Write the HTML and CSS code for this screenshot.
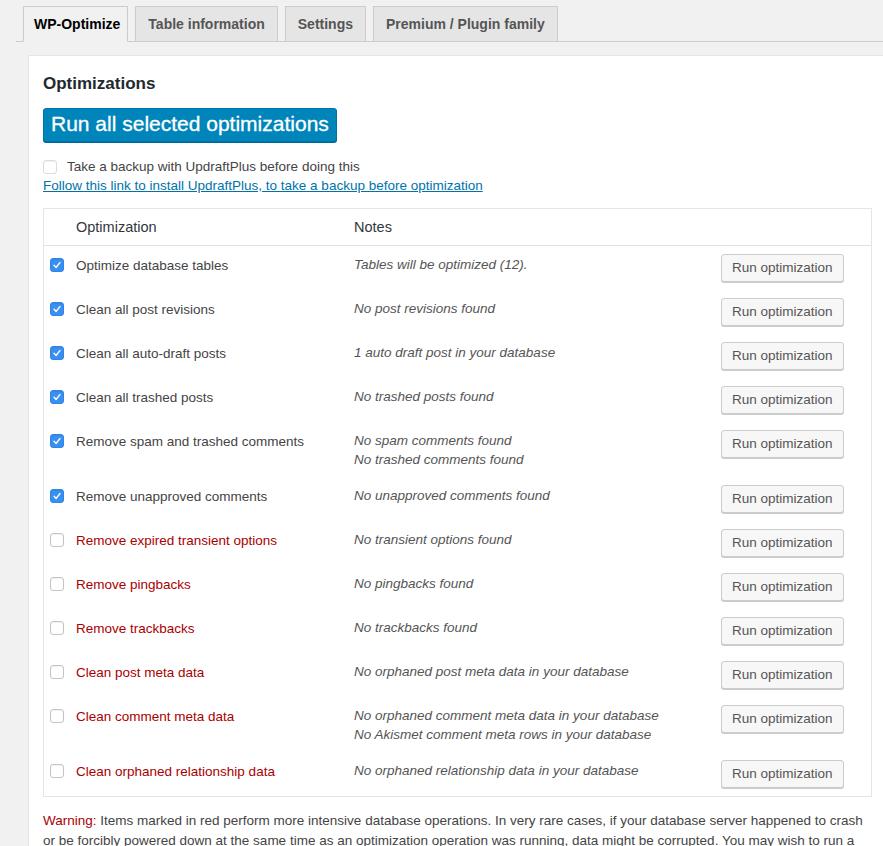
FILE: index.html
```html
<!DOCTYPE html>
<html lang="en">
<head>
    <meta charset="UTF-8">
    <meta name="viewport" content="width=device-width, initial-scale=1.0">
    <title>WP-Optimize</title>
    <link rel="stylesheet" href="styles.css">
</head>
<body>
    <div id="wrap">
        <nav class="nav-tabs">
            <a class="nav-tab active" href="#">WP-Optimize</a>
            <a class="nav-tab" href="#">Table information</a>
            <a class="nav-tab" href="#">Settings</a>
            <a class="nav-tab" href="#">Premium / Plugin family</a>
        </nav>

        <div class="panel">
            <h3 class="panel-title">Optimizations</h3>

            <button class="run-all">Run all selected optimizations</button>

            <label class="backup">
                <input type="checkbox" class="cb cb-light">
                <span>Take a backup with UpdraftPlus before doing this</span>
            </label>
            <a class="install-link" href="#">Follow this link to install UpdraftPlus, to take a backup before optimization</a>

            <table class="opts">
                <colgroup>
                    <col class="col-check">
                    <col class="col-name">
                    <col class="col-notes">
                    <col class="col-action">
                </colgroup>
                <thead>
                    <tr>
                        <th></th>
                        <th>Optimization</th>
                        <th>Notes</th>
                        <th></th>
                    </tr>
                </thead>
                <tbody>
                    <!--safe optimizations-->
                    <tr>
                        <td class="check"><input type="checkbox" class="cb" checked></td>
                        <td class="name">Optimize database tables</td>
                        <td class="notes">Tables will be optimized (12).</td>
                        <td class="action"><button class="btn">Run optimization</button></td>
                    </tr>
                    <tr>
                        <td class="check"><input type="checkbox" class="cb" checked></td>
                        <td class="name">Clean all post revisions</td>
                        <td class="notes">No post revisions found</td>
                        <td class="action"><button class="btn">Run optimization</button></td>
                    </tr>
                    <tr>
                        <td class="check"><input type="checkbox" class="cb" checked></td>
                        <td class="name">Clean all auto-draft posts</td>
                        <td class="notes">1 auto draft post in your database</td>
                        <td class="action"><button class="btn">Run optimization</button></td>
                    </tr>
                    <tr>
                        <td class="check"><input type="checkbox" class="cb" checked></td>
                        <td class="name">Clean all trashed posts</td>
                        <td class="notes">No trashed posts found</td>
                        <td class="action"><button class="btn">Run optimization</button></td>
                    </tr>
                    <tr>
                        <td class="check"><input type="checkbox" class="cb" checked></td>
                        <td class="name">Remove spam and trashed comments</td>
                        <td class="notes">No spam comments found<br>No trashed comments found</td>
                        <td class="action"><button class="btn">Run optimization</button></td>
                    </tr>
                    <tr>
                        <td class="check"><input type="checkbox" class="cb" checked></td>
                        <td class="name">Remove unapproved comments</td>
                        <td class="notes">No unapproved comments found</td>
                        <td class="action"><button class="btn">Run optimization</button></td>
                    </tr>

                    <!--intensive ones, shown in red-->
                    <tr>
                        <td class="check"><input type="checkbox" class="cb"></td>
                        <td class="name red">Remove expired transient options</td>
                        <td class="notes">No transient options found</td>
                        <td class="action"><button class="btn">Run optimization</button></td>
                    </tr>
                    <tr>
                        <td class="check"><input type="checkbox" class="cb"></td>
                        <td class="name red">Remove pingbacks</td>
                        <td class="notes">No pingbacks found</td>
                        <td class="action"><button class="btn">Run optimization</button></td>
                    </tr>
                    <tr>
                        <td class="check"><input type="checkbox" class="cb"></td>
                        <td class="name red">Remove trackbacks</td>
                        <td class="notes">No trackbacks found</td>
                        <td class="action"><button class="btn">Run optimization</button></td>
                    </tr>
                    <tr>
                        <td class="check"><input type="checkbox" class="cb"></td>
                        <td class="name red">Clean post meta data</td>
                        <td class="notes">No orphaned post meta data in your database</td>
                        <td class="action"><button class="btn">Run optimization</button></td>
                    </tr>
                    <tr>
                        <td class="check"><input type="checkbox" class="cb"></td>
                        <td class="name red">Clean comment meta data</td>
                        <td class="notes">No orphaned comment meta data in your database<br>No Akismet comment meta rows in your database</td>
                        <td class="action"><button class="btn">Run optimization</button></td>
                    </tr>
                    <tr>
                        <td class="check"><input type="checkbox" class="cb"></td>
                        <td class="name red">Clean orphaned relationship data</td>
                        <td class="notes">No orphaned relationship data in your database</td>
                        <td class="action"><button class="btn">Run optimization</button></td>
                    </tr>
                </tbody>
            </table>

            <p class="warning"><span class="red">Warning:</span> Items marked in red perform more intensive database operations. In very rare cases, if your database server happened to crash or be forcibly powered down at the same time as an optimization operation was running, data might be corrupted. You may wish to run a backup before optimizing.</p>
        </div>
    </div>
</body>
</html>
```

FILE: styles.css
```css
*{
    box-sizing: border-box;
}

html, body{
    margin: 0;
    padding: 0;
    overflow: hidden;
}

body{
    background-color: #f1f1f1;
    color: #444;
    font-family: "Liberation Sans", Arial, sans-serif;
    font-size: 13.5px;
    line-height: 19.5px;
}

#wrap{
    padding-left: 16px;
    padding-top: 6px;
}

/* tabs */
.nav-tabs{
    display: flex;
    border-bottom: 1px solid #ccc;
    padding-left: 7px;
}

.nav-tab{
    display: block;
    padding: 5px 12px;
    margin-right: 7px;
    margin-bottom: -1px;
    font-size: 14px;
    font-weight: bold;
    line-height: 24px;
    color: #555;
    text-decoration: none;
    background-color: #e5e5e5;
    border: 1px solid #ccc;
}

.nav-tab.active{
    color: #000;
    background-color: #f1f1f1;
    border-bottom-color: #f1f1f1;
    padding: 5px 7px 5px 10px;
}

/* main box */
.panel{
    margin-top: 13px;
    margin-left: 12px;
    padding: 16px 14px 20px;
    background-color: #fff;
    border: 1px solid #e5e5e5;
    border-right: none;
}

.panel-title{
    margin: 0;
    font-size: 17px;
    line-height: 23px;
    font-weight: bold;
    color: #23282d;
}

.run-all{
    display: block;
    margin-top: 13px;
    height: 34px;
    padding: 0 7px 2px;
    font-family: inherit;
    font-size: 21px;
    color: #fff;
    background-color: #0085ba;
    border: 1px solid #0073aa;
    border-radius: 3px;
    box-shadow: 0 1px 0 #006799;
    -webkit-text-stroke: 0.3px #fff;
}

.backup{
    display: flex;
    align-items: center;
    margin-top: 16px;
    height: 18px;
}

.backup span{
    margin-left: 10px;
}

.install-link{
    display: inline-block;
    color: #0073aa;
    text-decoration: underline;
}

/* checkboxes */
.cb{
    appearance: none;
    -webkit-appearance: none;
    margin: 0;
    width: 14px;
    height: 14px;
    background-color: #fff;
    border: 1px solid #c4c4c4;
    border-radius: 3px;
    box-shadow: inset 0 1px 1px rgba(0,0,0,0.06);
    display: block;
}

.cb-light{
    border-color: #dcdcdc;
}

.cb:checked{
    border-color: #2f86ea;
    background-color: #3a90f0;
    background-image: url("data:image/svg+xml;utf8,<svg xmlns='http://www.w3.org/2000/svg' viewBox='0 0 14 14'><path d='M3.6 7.4 L6 9.8 L10.4 4.2' fill='none' stroke='white' stroke-width='1.7' stroke-linecap='round' stroke-linejoin='round'/></svg>");
}

/* table */
.opts{
    margin-top: 12px;
    width: 829px;
    border: 1px solid #e5e5e5;
    border-spacing: 0;
    table-layout: fixed;
}

.col-check{ width: 32px; }
.col-name{ width: 278px; }
.col-notes{ width: 367px; }
.col-action{ width: 150px; }

.opts th{
    text-align: left;
    font-weight: normal;
    font-size: 14.5px;
    color: #32373c;
    padding: 8px 0;
    line-height: 20px;
    border-bottom: 1px solid #e1e1e1;
}

.opts td{
    vertical-align: top;
    padding: 8px 10px 8px 0;
}

.opts td.check{
    padding-left: 6px;
    padding-top: 12px;
}

.opts td.name{
    padding-top: 10px;
}

.opts td.notes{
    font-style: italic;
    color: #555;
    padding-top: 9px;
    padding-bottom: 7px;
}

.opts td.action{
    padding-right: 0;
}

.red{
    color: #a00;
}

.btn{
    height: 28px;
    padding: 0 10px 1px;
    font-family: inherit;
    font-size: 13.5px;
    color: #555;
    background-color: #f7f7f7;
    border: 1px solid #ccc;
    border-radius: 3px;
    box-shadow: 0 1px 0 #ccc;
}

.warning{
    margin: 14px 0 0;
    line-height: 20px;
    color: #444;
}
```
